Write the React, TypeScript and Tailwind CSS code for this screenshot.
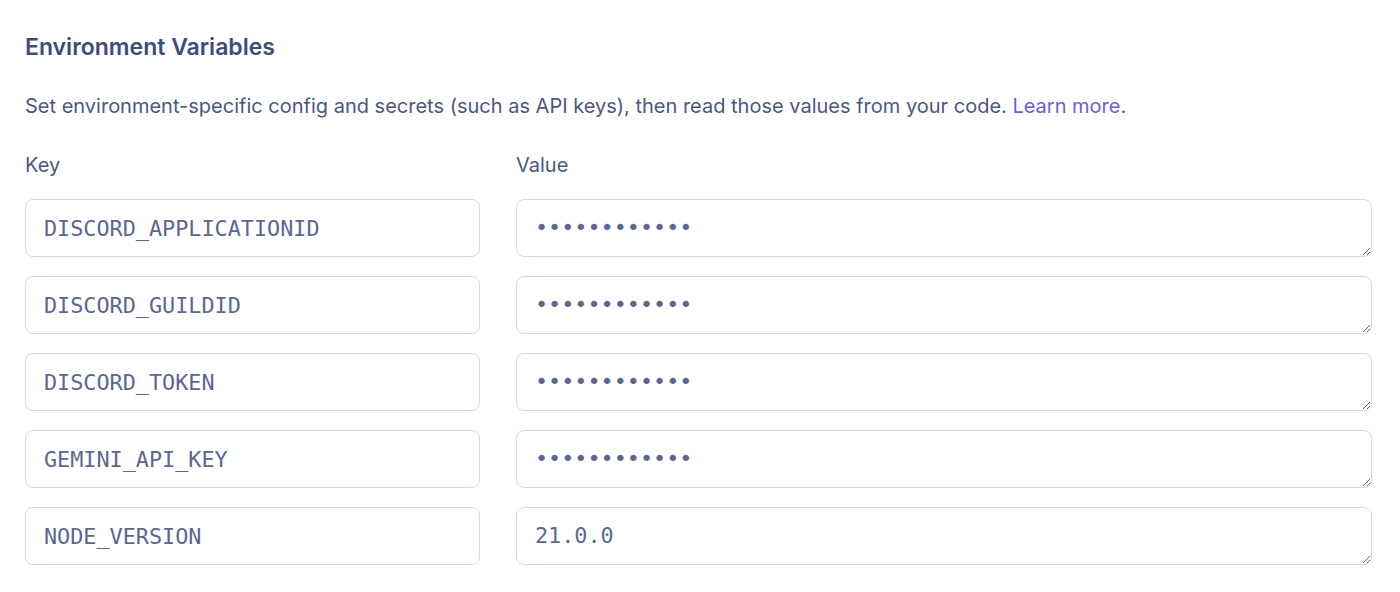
import React from "react";

const rows = [
  { key: "DISCORD_APPLICATIONID", value: "••••••••••••" },
  { key: "DISCORD_GUILDID", value: "••••••••••••" },
  { key: "DISCORD_TOKEN", value: "••••••••••••" },
  { key: "GEMINI_API_KEY", value: "••••••••••••" },
  { key: "NODE_VERSION", value: "21.0.0" },
];

export default function App() {
  return (
    <div className="w-[1400px] h-[592px] bg-white pl-[25px] pr-[28px] pt-[32px] font-['Inter',sans-serif] text-[#4a5784]">
      <h2 className="text-[23px] leading-[30px] font-semibold text-[#3d4c7c]">Environment Variables</h2>
      <p className="mt-[30px] text-[20px] leading-[28px]">
        Set environment-specific config and secrets (such as API keys), then read those values from your code.{" "}
        <a className="text-[#6c5ce7]" href="#">Learn more</a>.
      </p>
      <div className="mt-[31px] grid grid-cols-[455px_1fr] gap-x-[36px]">
        <div className="text-[20px] leading-[28px]">Key</div>
        <div className="text-[20px] leading-[28px]">Value</div>
      </div>
      <div className="mt-[20px] flex flex-col gap-[19px]">
        {rows.map((r) => (
          <div key={r.key} className="grid grid-cols-[455px_1fr] gap-x-[36px]">
            <input
              readOnly
              value={r.key}
              className="h-[58px] rounded-[8px] border border-[#d0d9f0] px-[18px] font-['DejaVu_Sans_Mono',monospace] text-[21.8px] text-[#5a6794] outline-none"
            />
            <textarea
              readOnly
              value={r.value}
              rows={1}
              className="h-[58px] rounded-[8px] border border-[#d0d9f0] px-[18px] py-[13px] leading-[30px] font-['DejaVu_Sans_Mono',monospace] text-[21.8px] text-[#5a6794] outline-none"
            />
          </div>
        ))}
      </div>
    </div>
  );
}
